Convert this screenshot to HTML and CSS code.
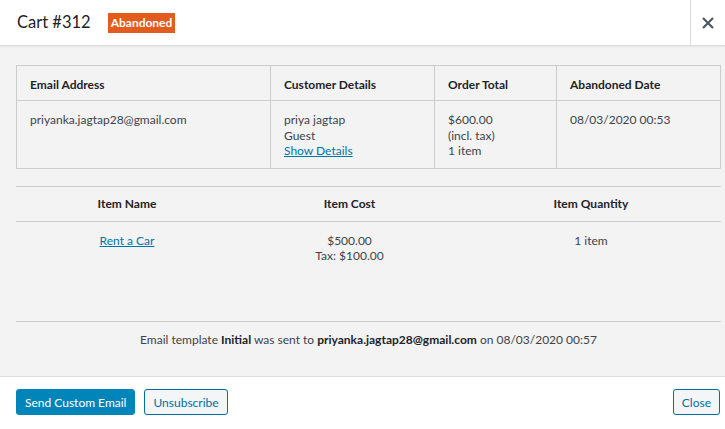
FILE: index.html
```html
<!DOCTYPE html>
<html lang="en">

<head>
    <meta charset="UTF-8">
    <meta name="viewport" content="width=device-width, initial-scale=1.0">
    <title>Cart #312</title>
    <link rel="stylesheet" href="styles.css">
</head>

<body>
    <div class="modal">
        <header class="modal_head">
            <h1>Cart #312</h1>
            <span class="badge">Abandoned</span>
            <button class="modal_close" type="button" aria-label="Close">
                <svg width="14" height="14" viewBox="0 0 14 14">
                    <path d="M2 2 L12 12 M12 2 L2 12" stroke="#50575e" stroke-width="2.2" fill="none"/>
                </svg>
            </button>
        </header>

        <div class="modal_body">
            <table class="cart_summary">
                <colgroup>
                    <col style="width: 254px">
                    <col style="width: 164px">
                    <col style="width: 122px">
                    <col>
                </colgroup>
                <thead>
                    <tr>
                        <th>Email Address</th>
                        <th>Customer Details</th>
                        <th>Order Total</th>
                        <th>Abandoned Date</th>
                    </tr>
                </thead>
                <tbody>
                    <tr>
                        <td>priyanka.jagtap28@gmail.com</td>
                        <td>priya jagtap<br>Guest<br><a href="#">Show Details</a></td>
                        <td>$600.00<br>(incl. tax)<br>1 item</td>
                        <td>08/03/2020 00:53</td>
                    </tr>
                </tbody>
            </table>

            <table class="cart_items">
                <colgroup>
                    <col style="width: 222px">
                    <col style="width: 223px">
                    <col>
                </colgroup>
                <thead>
                    <tr>
                        <th>Item Name</th>
                        <th>Item Cost</th>
                        <th>Item Quantity</th>
                    </tr>
                </thead>
                <tbody>
                    <tr>
                        <td><a href="#">Rent a Car</a></td>
                        <td>$500.00<br>Tax: $100.00</td>
                        <td>1 item</td>
                    </tr>
                </tbody>
            </table>

            <p class="email_log">Email template <b>Initial</b> was sent to <b>priyanka.jagtap28@gmail.com</b> on 08/03/2020 00:57</p>
        </div>

        <footer class="modal_foot">
            <button class="btn btn_primary" type="button">Send Custom Email</button>
            <button class="btn" type="button">Unsubscribe</button>
            <button class="btn btn_close" type="button">Close</button>
        </footer>
    </div>
</body>

</html>
```

FILE: styles.css
```css
* {
    margin: 0;
    padding: 0;
    box-sizing: border-box;
}

body {
    font: 12px/15.5px Lato, "Noto Sans", sans-serif;
    color: #3c434a;
    background: #fff;
}

a {
    color: #0073aa;
}

.modal {
    width: 725px;
    height: 429px;
    display: flex;
    flex-direction: column;
}

/* header */

.modal_head {
    height: 46px;
    display: flex;
    align-items: center;
    padding-left: 17px;
    background: #fff;
    border-bottom: 1px solid #dcdcde;
    box-shadow: 0 1px 2px rgba(0, 0, 0, 0.06);
    position: relative;
    z-index: 1;
}

.modal_head h1 {
    font-size: 16.5px;
    font-weight: 400;
    color: #1d2327;
}

.badge {
    margin-left: 17px;
    background: #e35b1d;
    color: #fff;
    font-weight: 700;
    font-size: 12px;
    line-height: 20px;
    padding: 0 3px;
}

.modal_close {
    margin-left: auto;
    align-self: stretch;
    width: 35px;
    border: 0;
    border-left: 1px solid #dcdcde;
    background: #fff;
    display: flex;
    align-items: center;
    justify-content: center;
}

/* body */

.modal_body {
    flex-grow: 1;
    background: #f3f3f3;
    padding: 19px 4px 0 16px;
}

table {
    width: 100%;
    border-collapse: collapse;
    table-layout: fixed;
}

th {
    font-weight: 700;
    color: #1d2327;
    text-align: left;
}

.cart_summary {
    border: 1px solid #ccc;
}

.cart_summary th,
.cart_summary td {
    border: 1px solid #ccc;
    padding-left: 13px;
    vertical-align: top;
}

.cart_summary th {
    height: 35px;
    padding-top: 3px;
    vertical-align: middle;
}

.cart_summary td {
    padding-top: 11px;
    padding-bottom: 9px;
}

.cart_items {
    margin-top: 17px;
    border-top: 1px solid #ccc;
}

.cart_items th,
.cart_items td {
    text-align: center;
    vertical-align: top;
}

.cart_items th {
    height: 35px;
    vertical-align: middle;
    border-bottom: 1px solid #ccc;
}

.cart_items td {
    height: 100px;
    padding-top: 11px;
    border-bottom: 1px solid #ccc;
}

.email_log {
    text-align: center;
    padding-top: 10px;
}

.email_log b {
    color: #1d2327;
}

/* footer */

.modal_foot {
    height: 53px;
    display: flex;
    align-items: flex-start;
    gap: 9px;
    padding: 12px 5px 0 16px;
    background: #fff;
    border-top: 1px solid #dcdcde;
}

.btn {
    height: 26px;
    padding: 0 8px;
    font: 12px Lato, "Noto Sans", sans-serif;
    color: #0071a1;
    background: #f3f5f6;
    border: 1px solid #0071a1;
    border-radius: 3px;
}

.btn_primary {
    color: #fff;
    background: #0085ba;
    border-color: #0085ba;
}

.btn_close {
    margin-left: auto;
}
```
